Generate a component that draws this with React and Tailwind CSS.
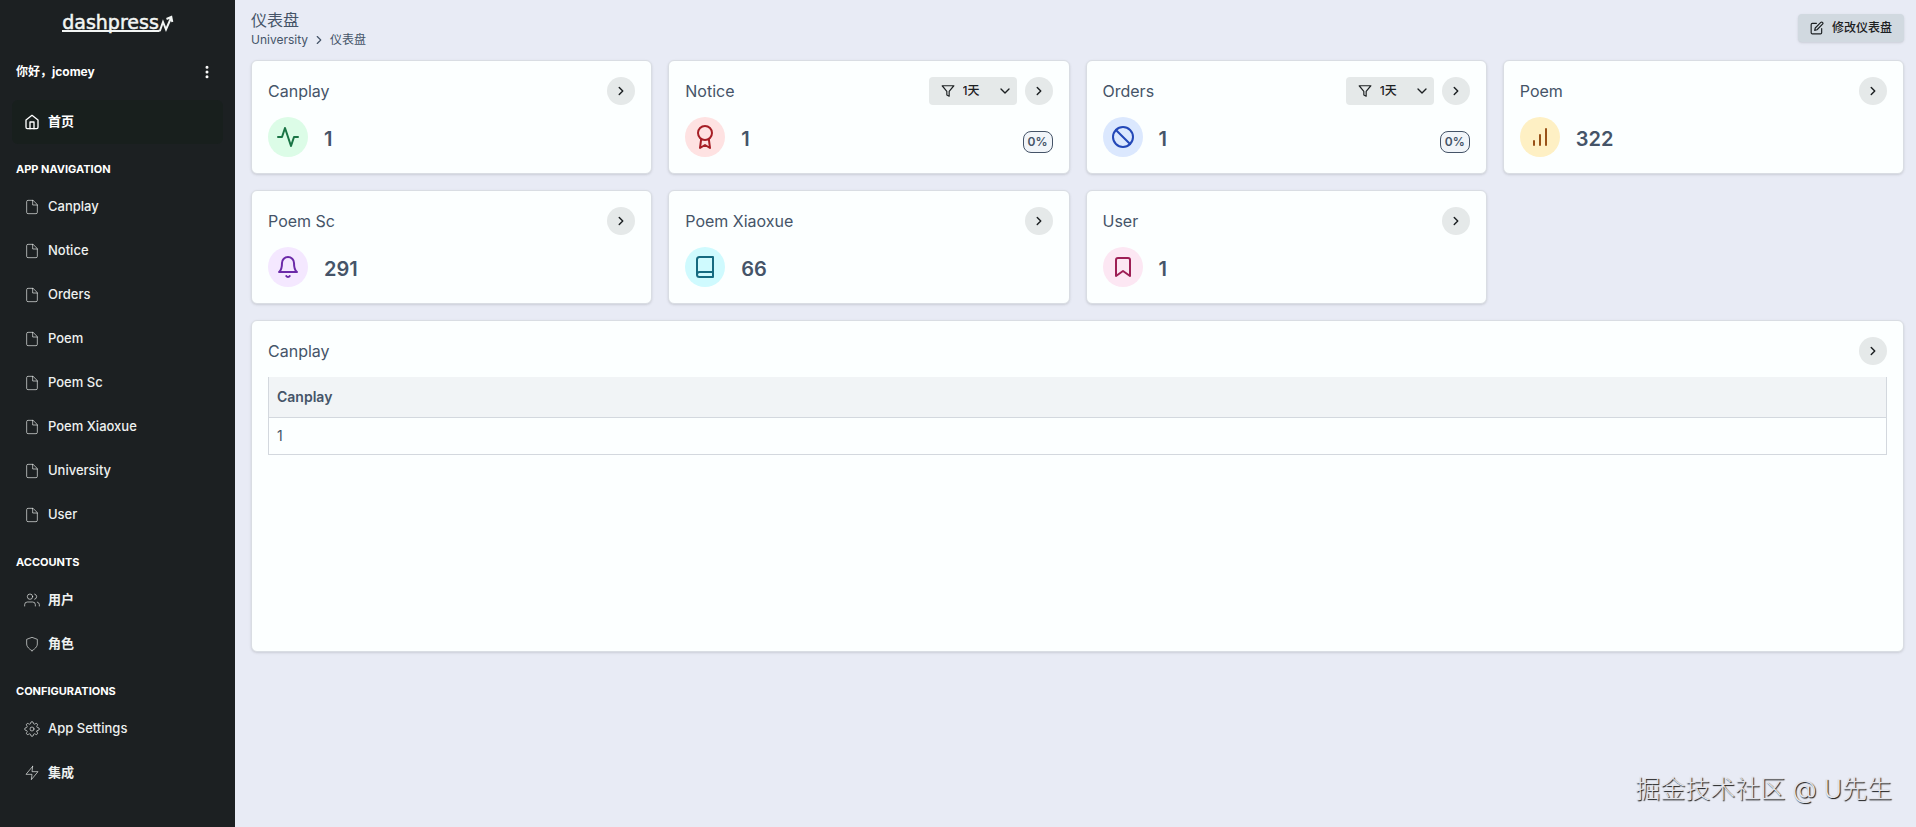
import { FiActivity, FiAward, FiSlash, FiBarChart, FiBell, FiBook, FiBookmark, FiFile, FiHome, FiUsers, FiShield, FiSettings, FiZap, FiMoreVertical, FiFilter, FiEdit, FiChevronRight, FiChevronDown } from "react-icons/fi";

const CARDS = [
  { title: "Canplay", value: "1", icon: FiActivity, tone: "bg-[#dcfce7] text-[#1b7446]" },
  { title: "Notice", value: "1", icon: FiAward, tone: "bg-[#fee2e2] text-[#a61f26]", filter: true },
  { title: "Orders", value: "1", icon: FiSlash, tone: "bg-[#dbe8fe] text-[#2348b8]", filter: true },
  { title: "Poem", value: "322", icon: FiBarChart, tone: "bg-[#fef0c4] text-[#995218]" },
  { title: "Poem Sc", value: "291", icon: FiBell, tone: "bg-[#f4e8ff] text-[#6b2aa8]" },
  { title: "Poem Xiaoxue", value: "66", icon: FiBook, tone: "bg-[#cffafe] text-[#156a80]" },
  { title: "User", value: "1", icon: FiBookmark, tone: "bg-[#fce7f3] text-[#9d1f55]" },
];

const SECTIONS = [
  {
    label: "App Navigation",
    items: ["Canplay", "Notice", "Orders", "Poem", "Poem Sc", "Poem Xiaoxue", "University", "User"].map((name) => ({ name, icon: FiFile })),
  },
  { label: "Accounts", items: [{ name: "用户", icon: FiUsers, bold: true }, { name: "角色", icon: FiShield, bold: true }] },
  { label: "Configurations", items: [{ name: "App Settings", icon: FiSettings }, { name: "集成", icon: FiZap, bold: true }] },
];

function Logo() {
  return (
    <a href="#home" aria-label="dashpress" className="mx-auto flex items-end text-[#f2f5f4]">
      <span className="border-b-2 border-current font-['DejaVu_Sans',sans-serif] text-[19px] leading-4 [-webkit-text-stroke:0.5px_currentColor]">dashpress</span>
      <svg viewBox="0 0 14 18" className="h-[18px] w-[14px] overflow-visible" fill="none" stroke="currentColor" strokeWidth="2">
        <path d="M-1 17 L1 16.500 L4 8 L7 15.500 L12 4 M7.500 5 L12.300 3 L13.300 8" />
      </svg>
    </a>
  );
}

function NavItem({ name, icon: Icon, active, bold }) {
  return (
    <li>
      <a
        href="#nav"
        className={`flex h-11 items-center gap-2 rounded-md pl-3 text-[13px] ${bold ? "font-bold" : "font-medium"} ${active ? "bg-[#181f1d] text-white" : "text-[#eef1f0]"}`}
      >
        <Icon size={16} strokeWidth={active ? 2 : 1} />
        {name}
      </a>
    </li>
  );
}

function Sidebar() {
  return (
    <aside className="w-[235px] shrink-0 bg-[#1c2022] text-white">
      <div className="flex h-12 items-start pt-[14px]">
        <Logo />
      </div>
      <div className="flex h-12 items-center justify-between pr-4 pl-4">
        <span className="text-xs font-bold">你好，jcomey</span>
        <button type="button" aria-label="Menu" className="flex size-6 items-center justify-center">
          <FiMoreVertical size={16} strokeWidth={2.5} />
        </button>
      </div>
      <nav className="px-3 pt-1">
        <ul>
          <NavItem name="首页" icon={FiHome} active bold />
        </ul>
        {SECTIONS.map((section) => (
          <section key={section.label}>
            <h2 className="px-1 pt-[15px] pb-[6px] text-[11px] leading-5 font-bold uppercase">{section.label}</h2>
            <ul>
              {section.items.map((item) => (
                <NavItem key={item.name} {...item} />
              ))}
            </ul>
          </section>
        ))}
      </nav>
    </aside>
  );
}

function OpenLink({ title }) {
  return (
    <a href="#open" aria-label={`Open ${title}`} className="flex size-7 items-center justify-center rounded-full bg-[#e5e9e9] text-[#1c2022]">
      <FiChevronRight size={14} strokeWidth={2.5} />
    </a>
  );
}

function RangeFilter({ title }) {
  return (
    <div className="grid h-7 w-22 items-center rounded bg-[#e5e9e9] text-[#1c2022]">
      <FiFilter size={14} className="pointer-events-none col-start-1 row-start-1 ml-3" />
      <select aria-label={`${title} range`} className="col-start-1 row-start-1 h-7 w-full appearance-none pl-[34px] text-xs font-medium">
        <option>1天</option>
      </select>
      <FiChevronDown size={16} className="pointer-events-none col-start-1 row-start-1 mr-1 justify-self-end" />
    </div>
  );
}

const PANEL = "rounded-md border border-[#d9dde3] bg-[#fcffff] px-4 pt-4 shadow-sm";

function CardHeader({ title, filter }) {
  return (
    <div className="flex items-center justify-between">
      <h2 className="text-base leading-7">{title}</h2>
      <div className="flex gap-2">
        {filter && <RangeFilter title={title} />}
        <OpenLink title={title} />
      </div>
    </div>
  );
}

function StatCard({ title, value, icon: Icon, tone, filter }) {
  return (
    <article className={`${PANEL} h-[114px]`}>
      <CardHeader title={title} filter={filter} />
      <div className="mt-3 flex items-center">
        <span className={`flex size-10 items-center justify-center rounded-full ${tone}`}>
          <Icon size={24} />
        </span>
        <span className="ml-4 pt-1 text-xl font-semibold">{value}</span>
        {filter && (
          <span className="mt-[10px] ml-auto rounded-lg border border-current bg-[#f1f5f9] px-1 text-xs leading-5 font-semibold">0%</span>
        )}
      </div>
    </article>
  );
}

export default function App() {
  return (
    <div className="flex min-h-screen bg-[#e8ebf5] font-['Inter','Noto_Sans_CJK_SC',sans-serif] text-[#455468]">
      <Sidebar />
      <div className="flex min-w-0 flex-1 flex-col pr-3 pl-4">
        <header className="flex h-[60px] items-start justify-between">
          <div className="pt-[10px]">
            <h1 className="text-base leading-5">仪表盘</h1>
            <nav aria-label="Breadcrumb" className="flex items-center gap-1 text-xs leading-5">
              <a href="#university">University</a>
              <FiChevronRight size={14} />
              <span>仪表盘</span>
            </nav>
          </div>
          <button type="button" className="mt-[14px] flex h-7 items-center gap-2 rounded bg-[#d1d9e0] px-3 text-xs font-medium text-[#1c2022] shadow-sm">
            <FiEdit size={14} />
            修改仪表盘
          </button>
        </header>
        <main className="grid grid-cols-4 gap-4">
          {CARDS.map((card) => (
            <StatCard key={card.title} {...card} />
          ))}
          <article className={`${PANEL} col-span-4 h-[332px]`}>
            <CardHeader title="Canplay" />
            <table className="mt-3 w-full border-collapse border border-t-0 border-[#d3d8de] text-left text-sm">
              <thead>
                <tr className="h-10 border-b border-[#d3d8de] bg-[#f1f4f6]">
                  <th className="px-2 font-semibold">Canplay</th>
                </tr>
              </thead>
              <tbody>
                <tr className="h-[37px]">
                  <td className="px-2">1</td>
                </tr>
              </tbody>
            </table>
          </article>
        </main>
        <p className="mt-auto mr-3 mb-[22px] self-end text-[25px] leading-8 font-light text-[#e3e4ea] [text-shadow:1px_1px_1px_#111]">掘金技术社区 @ U先生</p>
      </div>
    </div>
  );
}
